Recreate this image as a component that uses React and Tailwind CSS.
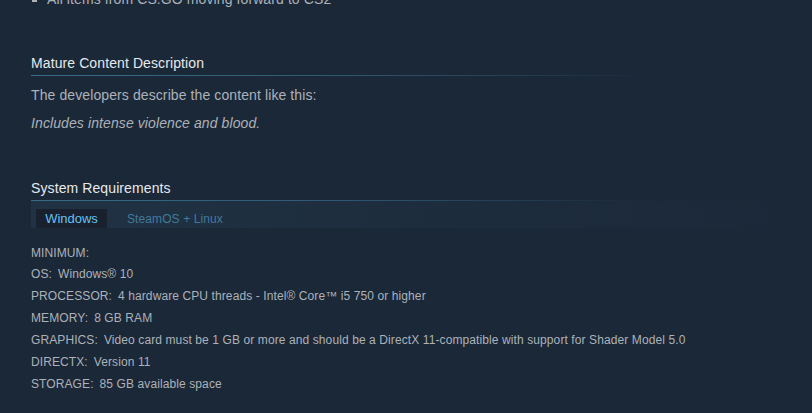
import React from 'react';

const reqs = [
  ['OS:', 'Windows® 10'],
  ['PROCESSOR:', '4 hardware CPU threads - Intel® Core™ i5 750 or higher'],
  ['MEMORY:', '8 GB RAM'],
  ['GRAPHICS:', 'Video card must be 1 GB or more and should be a DirectX 11-compatible with support for Shader Model 5.0'],
  ['DIRECTX:', 'Version 11'],
  ['STORAGE:', '85 GB available space'],
];

function SectionTitle({ children }) {
  return (
    <div>
      <h2 className="text-[14px] leading-[18px] text-[#e6e9ec] font-normal">{children}</h2>
      <div className="h-px w-[620px] mt-[3px] bg-gradient-to-r from-[#3a6b8b] via-[#2f5874] to-transparent" />
    </div>
  );
}

export default function App() {
  return (
    <div className="h-[413px] overflow-hidden bg-[#1b2838] pl-[31px] font-['Liberation_Sans',Arial,sans-serif] tracking-[0.1px] text-[#acb2b8]">
      <ul className="mt-[-10px] text-[14px] leading-[18px]">
        <li className="flex items-center">
          <span className="ml-[1px] mr-[10px] inline-block h-[5px] w-[5px] bg-[#acb2b8]" />
          All items from CS:GO moving forward to CS2
        </li>
      </ul>

      <div className="mt-[46px]">
        <SectionTitle>Mature Content Description</SectionTitle>
        <p className="mt-[10px] text-[14px] leading-[18px]">The developers describe the content like this:</p>
        <p className="mt-[10px] text-[14px] leading-[18px] italic">Includes intense violence and blood.</p>
      </div>

      <div className="mt-[47px]">
        <SectionTitle>System Requirements</SectionTitle>
        <div className="flex h-[27px] w-[760px] items-end bg-gradient-to-r from-[#203244] to-transparent">
          <div className="ml-[5px] flex h-[19px] w-[71px] items-center justify-center bg-[#18212d] text-[13px] tracking-normal text-[#67c1f5]">
            Windows
          </div>
          <div className="ml-[20px] flex h-[19px] items-center text-[12px] text-[#417a9b]">SteamOS + Linux</div>
        </div>
        <div className="mt-[15px] text-[12px] leading-[22px]">
          <div className="leading-[20px]">MINIMUM:</div>
          {reqs.map(([k, v]) => (
            <div key={k}>
              <span>{k}</span>
              <span className="ml-[6px]">{v}</span>
            </div>
          ))}
        </div>
      </div>
    </div>
  );
}
